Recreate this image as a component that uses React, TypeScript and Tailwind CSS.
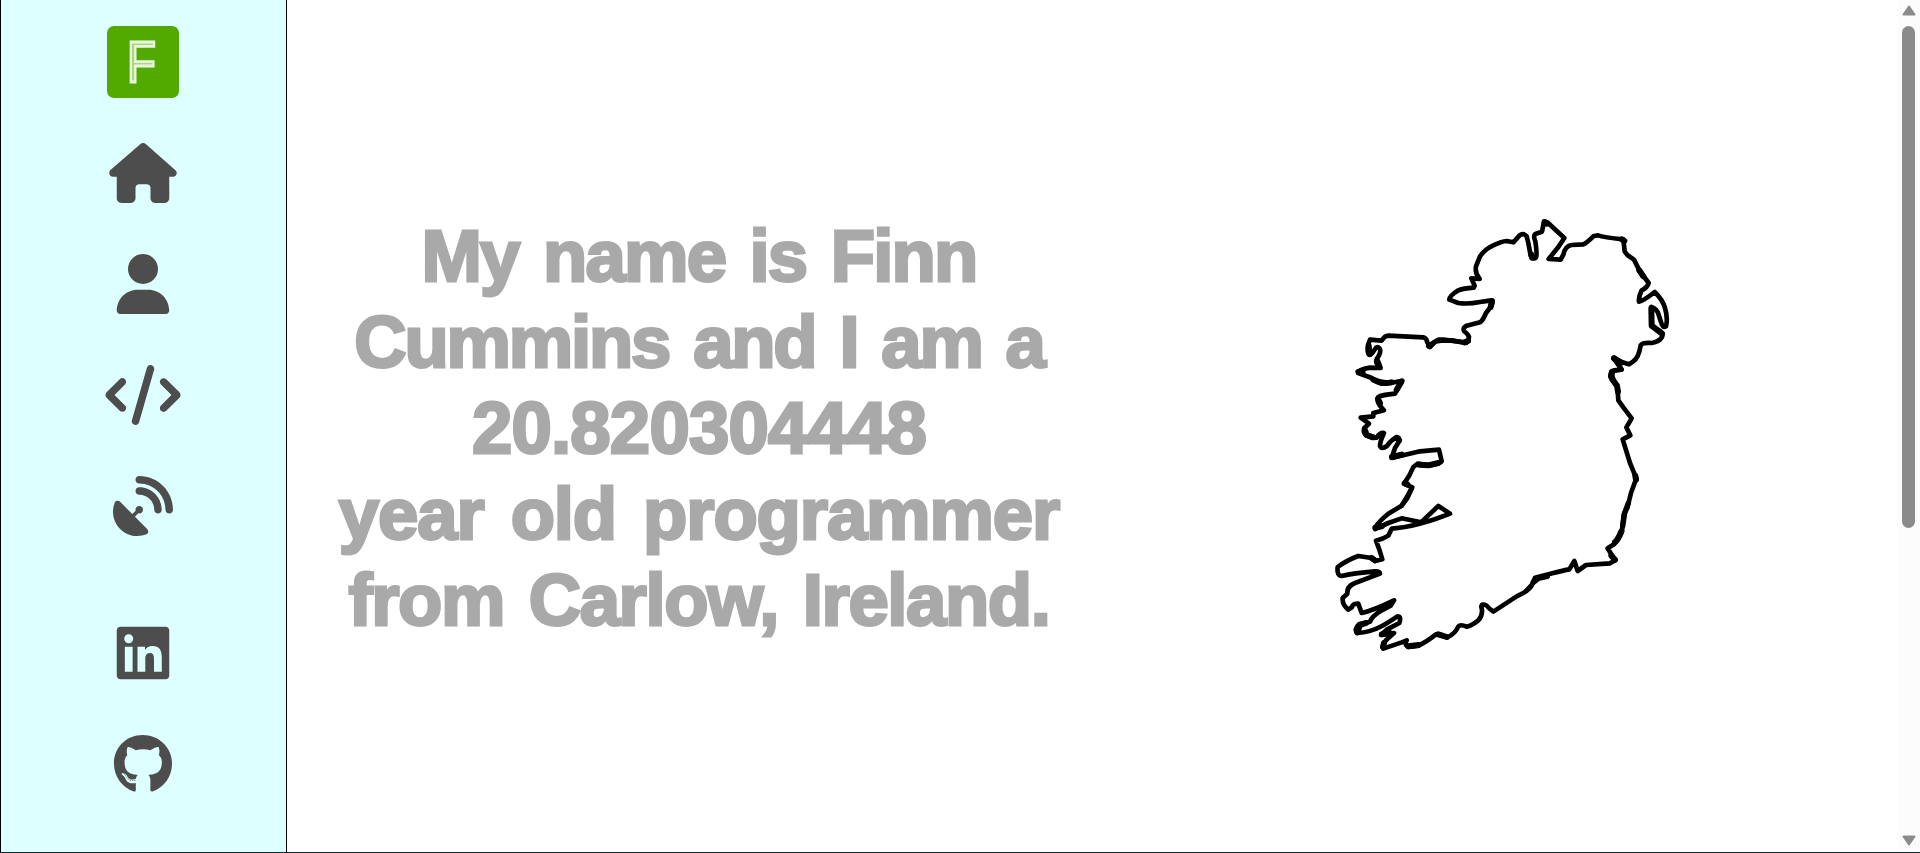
import { FaCode, FaGithub, FaHouse, FaLinkedin, FaSatelliteDish, FaUser } from "react-icons/fa6";

const navItems = [
  { label: "Home", Icon: FaHouse, width: "w-[68px]" },
  { label: "About", Icon: FaUser, width: "w-[60px]" },
  { label: "Projects", Icon: FaCode, width: "w-[76px]" },
  { label: "Contact", Icon: FaSatelliteDish, width: "w-[60px]" },
];

const socialItems = [
  { label: "LinkedIn", Icon: FaLinkedin, width: "w-[60px]" },
  { label: "GitHub", Icon: FaGithub, width: "w-[60px]" },
];

function Logo() {
  return (
    <div className="mr-px flex h-[72px] w-[72px] items-center justify-center rounded-[7px] bg-[#52aa00]">
      <span className="mr-[3px] block scale-x-[0.83] font-['Liberation_Sans'] text-[57px] leading-[72px] text-[#a9d480] [-webkit-text-stroke:2.8px_#eaf5dd]">
        F
      </span>
    </div>
  );
}

function Sidebar() {
  return (
    <nav className="flex h-full w-[287px] shrink-0 flex-col items-center border-x border-black bg-[#deffff] pt-[26px] text-[60px] text-[#4d4d4d]">
      <Logo />
      <div className="mt-[45px] mr-px flex flex-col items-center gap-[51px]">
        {navItems.map(({ label, Icon, width }) => (
          <a key={label} aria-label={label} className="block">
            <Icon className={`block h-[60px] ${width}`} />
          </a>
        ))}
      </div>
      <div className="mt-[87px] mr-px flex flex-col items-center gap-[51px]">
        {socialItems.map(({ label, Icon, width }) => (
          <a key={label} aria-label={label} className="block">
            <Icon className={`block h-[60px] ${width}`} />
          </a>
        ))}
      </div>
    </nav>
  );
}

function Headline() {
  return (
    <h1 className="w-[760px] text-center font-['Liberation_Sans'] text-[72.5px] leading-[86.1px] font-bold whitespace-nowrap text-[#a9a9a9] [-webkit-text-stroke:2.8px_#a9a9a9]">
      <span className="block tracking-[-1.8px] [word-spacing:6px]">My name is Finn</span>
      <span className="block tracking-[-2.2px] [word-spacing:6px]">Cummins and I am a</span>
      <span className="block tracking-[-0.8px]">20.820304448</span>
      <span className="block tracking-[-1.1px] [word-spacing:8px]">year old programmer</span>
      <span className="block tracking-[-1.4px] [word-spacing:6px]">from Carlow, Ireland.</span>
    </h1>
  );
}

function IrelandMap() {
  return (
    <svg
      viewBox="0 40 1080 1320"
      className="h-[440px] w-[360px]"
      fill="none"
      stroke="#000"
      strokeWidth="14"
      strokeLinejoin="round"
      strokeLinecap="round"
    >
      {/* north coast */}
      <g transform="translate(330 0)">
        <path d="M-5 440 8 430 25 420 40 420 104 428Q116 427 117 412Q115 404 102 394Q98 384 110 378L150 368Q159 362 168 340L182 322Q192 304 184 302L150 307Q115 314 85 310L58 300Q57 290 85 272Q100 266 131 264L134 258 124 236 149 238Q134 220 138 200L150 170Q165 148 190 137Q215 125 230 124L250 128 268 108Q280 98 290 110L295 130 302 168Q310 182 318 173Q322 165 316 125Q308 106 318 102L336 96 342 65 352 68 403 115 385 142 356 178 392 180 400 165Q406 138 425 136L460 134Q470 130 490 110L504 107Q520 113 580 119L584 155 592 166 612 180 628 212 656 250Q652 264 635 272Q625 292 627 306Q640 304 674 277Q698 300 705 325Q714 355 708 380Q698 386 694 370L686 345Q682 328 664 322L665 380 680 388Q702 398 696 412Q688 426 665 430Q638 428 632 437Q626 475 610 485L597 494 575 487 550 475 574 508 545 514 543 530" />
        <path strokeWidth="18" d="M104 428 114 424M182 322 186 304M304 165 306 174M344 68 350 72M664 326 665 378 696 402M552 476 572 488M545 520 543 530M628 212 640 230M576 119 583 124" />
      </g>
      {/* east coast */}
      <g transform="translate(600 420)">
        <path d="M283 55 305 90 283 93Q268 100 275 120L292 140 295 182 310 203 335 236 319 263 331 287 308 299 330 370 349 416 333 460 322 505 311 525Q307 560 306 575Q296 600 282 614L263 626 285 662 270 671 198 676 173 694 163 664 148 689Q130 692 100 700L45 714 36 735 20 752" />
        <path strokeWidth="18" d="M284 57 302 70M276 98Q270 112 291 138L294 156M304 575Q294 600 285 607M274 648 285 660M346 408 348 420" />
        <path strokeWidth="16" d="M325 490 314 520 308 560" />
      </g>
      {/* south coast */}
      <g transform="translate(0 870)">
        <path d="M636 285Q630 302 590 320L520 366Q508 358 500 348Q486 340 484 350L486 362Q487 380 475 392Q455 408 440 411Q420 402 414 412Q406 432 382 443Q360 432 348 434Q320 456 295 468L265 472Q252 466 260 452L245 458 190 477Q184 464 205 445L222 430 183 436 200 420 238 400Q245 380 232 380Q200 402 180 412Q150 428 112 430Q100 420 118 403L150 396Q156 380 185 362L212 348 222 332Q160 362 125 370L115 342Q98 342 96 352L85 360Q66 344 68 325L82 312Q80 290 105 280L180 252Q180 244 165 245Q100 250 65 259Q50 258 53 232Q80 212 115 199L155 205 165 214 187 209 178 180 168 153Q190 148 205 138L215 117Q290 112 390 72L355 49 303 98 245 86 205 100 165 118Q162 108 205 72L245 48 262 20 275 -5" />
        <path strokeWidth="18" d="M112 428 120 406 138 400M155 205 165 212M265 470 296 466M189 472 192 460M355 434 380 442M186 434 210 430M166 114 185 110" />
        <path strokeWidth="16" d="M640 278 655 266 682 260" />
      </g>
      {/* west coast */}
      <g transform="translate(0 360)">
        <path d="M245 558 262 535 277 503 252 492Q270 468 280 442L293 432 325 438Q362 432 365 425L357 390 300 395 215 415 225 385 238 364Q238 352 230 352Q212 362 200 380Q184 390 180 378Q180 366 192 340Q180 338 170 354L158 355 137 346Q128 336 133 325L147 312 122 294 160 290 160 280 192 272Q166 246 175 232Q184 226 225 222L247 183Q215 190 185 192Q170 188 155 175L115 160Q112 150 150 144L182 145Q164 130 170 118Q184 100 180 88Q172 76 164 90Q152 110 146 104Q138 86 150 60L185 63Q194 48 205 48L310 53Q320 56 322 68L330 82 346 66Q355 62 395 62L438 70" />
        <path strokeWidth="18" d="M115 157 128 155M160 180Q186 194 214 188M230 210 244 186M216 412 245 405M135 332 140 346 158 352M230 355 237 362M298 435 325 437 355 430M254 491 262 494M174 238 180 250M146 78 148 100M172 124 178 140" />
      </g>
    </svg>
  );
}

function Scrollbar() {
  return (
    <div className="flex h-full w-[23px] shrink-0 flex-col items-center bg-[#fcfcfc] pt-[5px] pr-px pl-[2px]">
      <svg viewBox="0 0 14 11" className="mr-px h-[11px] w-[14px]">
        <path d="M7 1.5 12.5 9.5H1.5Z" fill="#8b8b8b" stroke="#8b8b8b" strokeWidth="2" strokeLinejoin="round" />
      </svg>
      <div className="mt-[10px] mr-px h-[502px] w-[13px] shrink-0 rounded-full bg-[#8b8b8b]" />
      <svg viewBox="0 0 14 11" className="mt-auto mr-px mb-[6px] h-[11px] w-[14px]">
        <path d="M7 9.5 12.5 1.5H1.5Z" fill="#8b8b8b" stroke="#8b8b8b" strokeWidth="2" strokeLinejoin="round" />
      </svg>
    </div>
  );
}

export default function App() {
  return (
    <div className="flex h-[853px] w-full overflow-hidden border-b border-[#102a33] bg-white">
      <Sidebar />
      <main className="flex h-full min-w-0 flex-1">
        <section className="ml-[32px] flex w-[760px] shrink-0 flex-col pt-[213px]">
          <Headline />
        </section>
        <section className="flex flex-col pt-[213px] pl-[241px]">
          <IrelandMap />
        </section>
      </main>
      <Scrollbar />
    </div>
  );
}
